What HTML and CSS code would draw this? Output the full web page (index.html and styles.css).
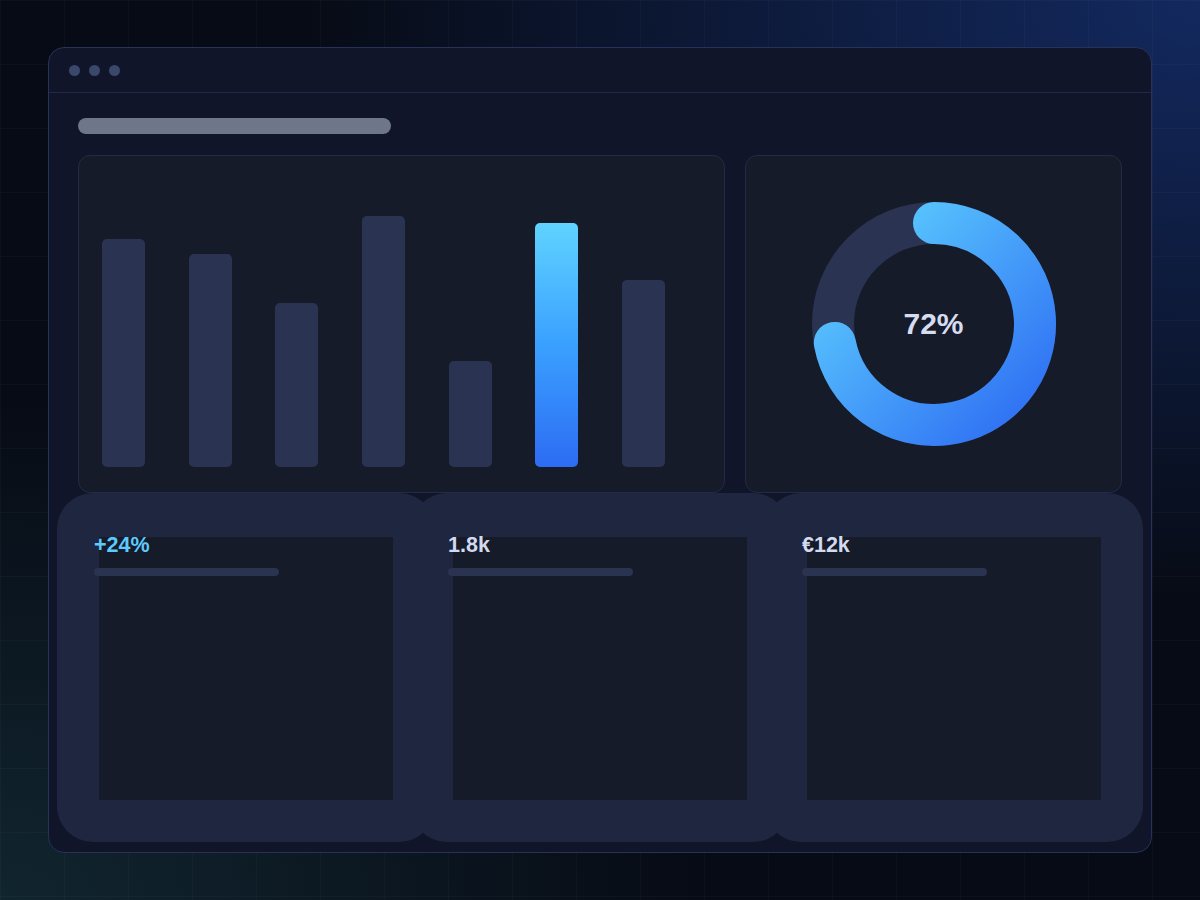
FILE: index.html
```html
<!DOCTYPE html>
<html lang="en">
<head>
    <meta charset="utf-8">
    <meta name="viewport" content="width=device-width, initial-scale=1.0">
    <title>Dashboard</title>
    <link rel="stylesheet" href="styles.css">
</head>
<body>
    <div class="window">
        <div class="titlebar">
            <span class="dot"></span>
            <span class="dot"></span>
            <span class="dot"></span>
        </div>
        <div class="content">
            <div class="heading-line"></div>
            <div class="panels">
                <div class="panel bars">
                    <div class="bar" style="height: 228px"></div>
                    <div class="bar" style="height: 213px"></div>
                    <div class="bar" style="height: 164px"></div>
                    <div class="bar" style="height: 251px"></div>
                    <div class="bar" style="height: 106px"></div>
                    <div class="bar bar-active" style="height: 244px"></div>
                    <div class="bar" style="height: 187px"></div>
                </div>
                <div class="panel donut">
                    <svg width="246" height="246" viewBox="0 0 246 246">
                        <defs>
                            <linearGradient id="ring" gradientUnits="userSpaceOnUse" x1="22" y1="22" x2="224" y2="224">
                                <stop offset="0" stop-color="#5fd3ff"/>
                                <stop offset="1" stop-color="#2d6cf3"/>
                            </linearGradient>
                        </defs>
                        <circle cx="123" cy="123" r="101" fill="none" stroke="#2a3452" stroke-width="42"/>
                        <!-- 72% arc, clockwise from the top -->
                        <path d="M 123 22 A 101 101 0 1 1 23.8 141.9" fill="none" stroke="url(#ring)"
                              stroke-width="42" stroke-linecap="round"/>
                    </svg>
                    <span class="donut-value">72%</span>
                </div>
            </div>
            <div class="cards">
                <div class="card">
                    <div class="card-value accent">+24%</div>
                    <div class="card-line"></div>
                </div>
                <div class="card">
                    <div class="card-value">1.8k</div>
                    <div class="card-line"></div>
                </div>
                <div class="card">
                    <div class="card-value">€12k</div>
                    <div class="card-line"></div>
                </div>
            </div>
        </div>
    </div>
</body>
</html>
```

FILE: styles.css
```css
body {
    margin: 0;
    padding: 0;
    width: 1200px;
    height: 900px;
    display: flex;
    align-items: center;
    justify-content: center;
    font-family: "Liberation Sans", Arial, sans-serif;
    background-color: #070b15;
    background-image:
        linear-gradient(rgba(255, 255, 255, 0.025) 1px, transparent 1px),
        linear-gradient(90deg, rgba(255, 255, 255, 0.025) 1px, transparent 1px),
        radial-gradient(ellipse 900px 600px at 100% 0, #13295f 0, rgba(19, 41, 95, 0) 100%),
        radial-gradient(ellipse 700px 500px at 0 100%, #11252f 0, rgba(17, 37, 47, 0) 100%);
    background-size: 64px 64px, 64px 64px, auto, auto;
}

.window {
    width: 1102px;
    border: 1px solid #27325a;
    border-radius: 16px;
    background-color: #10152a;
}

.titlebar {
    height: 44px;
    display: flex;
    align-items: center;
    gap: 9px;
    padding-left: 20px;
    border-bottom: 1px solid #20294a;
}

.dot {
    width: 11px;
    height: 11px;
    border-radius: 50%;
    background-color: #3a486b;
}

.content {
    padding: 25px 29px 10px;
}

.heading-line {
    width: 313px;
    height: 16px;
    border-radius: 8px;
    background-color: #6e7789;
    margin-bottom: 21px;
}

.panels {
    display: grid;
    grid-template-columns: 647px 377px;
    gap: 20px;
    height: 338px;
}

.panel {
    box-sizing: border-box;
    border: 1px solid #232a45;
    border-radius: 12px;
    background-color: #161b2a;
}

.bars {
    display: flex;
    align-items: flex-end;
    gap: 43.7px;
    padding: 0 0 25px 23px;
}

.bar {
    width: 43px;
    border-radius: 5px;
    background-color: #2a3452;
}

.bar-active {
    background: linear-gradient(180deg, #60d3ff 0%, #3aa0ff 50%, #2d6cf3 100%);
}

.donut {
    position: relative;
    display: flex;
    align-items: center;
    justify-content: center;
}

.donut-value {
    position: absolute;
    font-size: 30px;
    font-weight: bold;
    color: #d6ddf1;
}

.cards {
    display: flex;
    margin: 0 -21px;
}

.card {
    box-sizing: border-box;
    width: 378px;
    height: 349px;
    flex-shrink: 0;
    padding: 40px 37px 0;
    border-radius: 36px;
    background:
        linear-gradient(#161b2a, #161b2a) 42px 44px / 294px 263px no-repeat,
        #1f2640;
}

.card + .card {
    margin-left: -24px;
}

.card-value {
    font-size: 21.5px;
    line-height: 24px;
    font-weight: bold;
    color: #d3daef;
}

.card-value.accent {
    color: #5ccafd;
}

.card-line {
    width: 185px;
    height: 8px;
    margin-top: 11px;
    border-radius: 4px;
    background-color: #2a3350;
}
```
